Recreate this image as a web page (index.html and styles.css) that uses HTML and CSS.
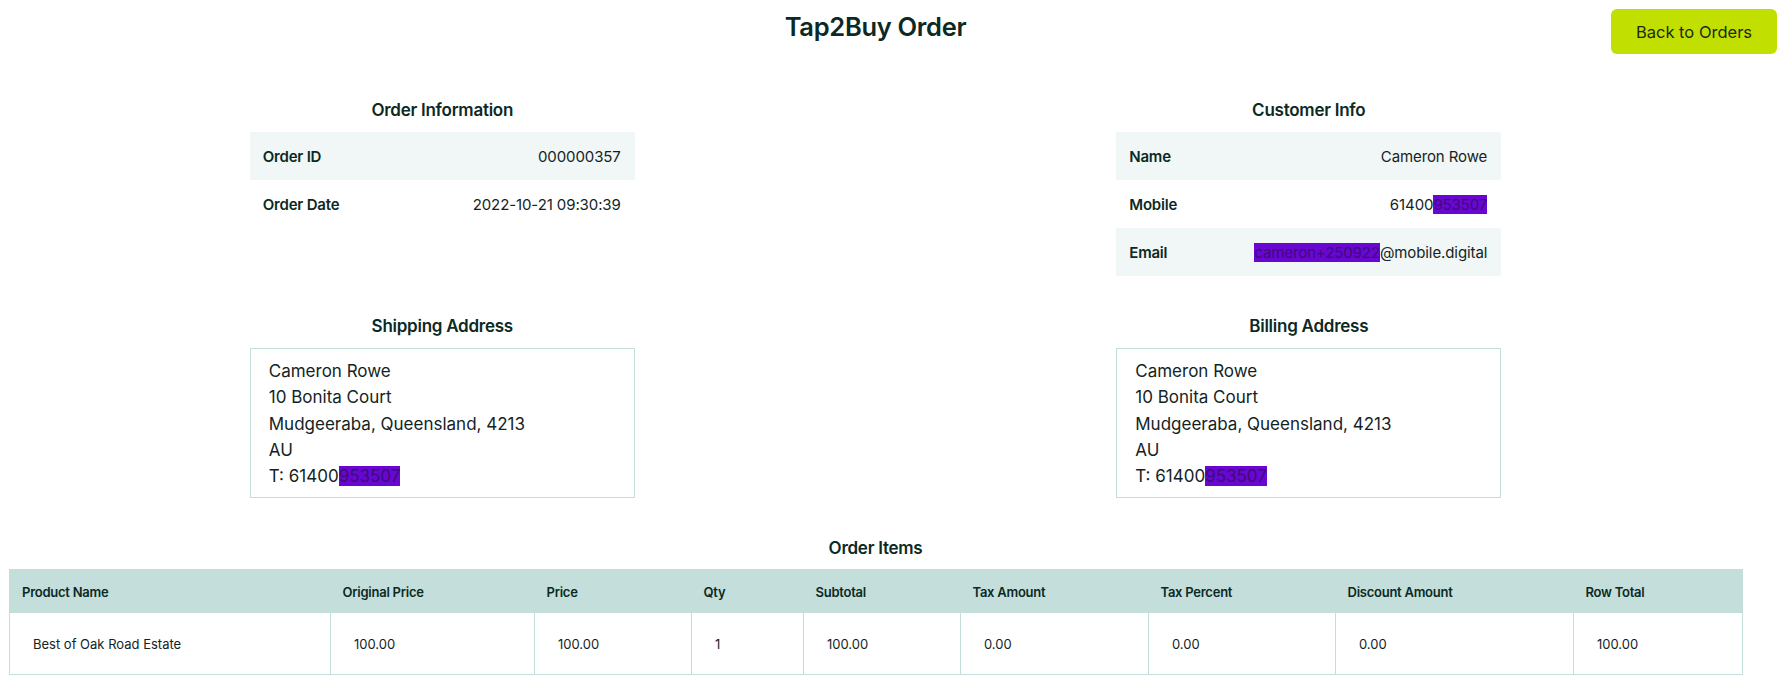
FILE: index.html
```html
<!DOCTYPE html>
<html lang="en">
<head>
<meta charset="utf-8">
<title>Tap2Buy Order</title>
<link rel="stylesheet" href="styles.css">
</head>
<body>
<a class="back-btn" href="#">Back to Orders</a>
<div class="page">
  <h1 class="title">Tap2Buy Order</h1>

  <div class="grid">
    <section class="block">
      <h2 class="block-title">Order Information</h2>
      <div class="kv">
        <div class="kv-row shade"><span class="kv-key">Order ID</span><span class="kv-val">000000357</span></div>
        <div class="kv-row"><span class="kv-key">Order Date</span><span class="kv-val">2022-10-21 09:30:39</span></div>
      </div>
    </section>

    <section class="block">
      <h2 class="block-title">Customer Info</h2>
      <div class="kv">
        <div class="kv-row shade"><span class="kv-key">Name</span><span class="kv-val">Cameron Rowe</span></div>
        <div class="kv-row"><span class="kv-key">Mobile</span><span class="kv-val">61400<span class="mask">953507</span></span></div>
        <div class="kv-row shade"><span class="kv-key">Email</span><span class="kv-val"><span class="mask">cameron+250922</span>@mobile.digital</span></div>
      </div>
    </section>

    <section class="block">
      <h2 class="block-title">Shipping Address</h2>
      <div class="address">
        <div>Cameron Rowe</div>
        <div>10 Bonita Court</div>
        <div>Mudgeeraba, Queensland, 4213</div>
        <div>AU</div>
        <div>T: 61400<span class="mask">953507</span></div>
      </div>
    </section>

    <section class="block">
      <h2 class="block-title">Billing Address</h2>
      <div class="address">
        <div>Cameron Rowe</div>
        <div>10 Bonita Court</div>
        <div>Mudgeeraba, Queensland, 4213</div>
        <div>AU</div>
        <div>T: 61400<span class="mask">953507</span></div>
      </div>
    </section>
  </div>

  <section class="items">
    <h2 class="block-title items-title">Order Items</h2>
    <table class="items-table">
      <colgroup>
        <col class="c-name"><col class="c-orig"><col class="c-price"><col class="c-qty"><col class="c-sub"><col class="c-taxa"><col class="c-taxp"><col class="c-disc"><col class="c-total">
      </colgroup>
      <thead>
        <tr>
          <th>Product Name</th>
          <th>Original Price</th>
          <th>Price</th>
          <th>Qty</th>
          <th>Subtotal</th>
          <th>Tax Amount</th>
          <th>Tax Percent</th>
          <th>Discount Amount</th>
          <th>Row Total</th>
        </tr>
      </thead>
      <tbody>
        <tr>
          <td>Best of Oak Road Estate</td>
          <td>100.00</td>
          <td>100.00</td>
          <td>1</td>
          <td>100.00</td>
          <td>0.00</td>
          <td>0.00</td>
          <td>0.00</td>
          <td>100.00</td>
        </tr>
      </tbody>
    </table>
  </section>
</div>
</body>
</html>
```

FILE: styles.css
```css
html, body {
  background: #ffffff;
}

body {
  margin: 8px;
  font-family: "Inter", "Liberation Sans", sans-serif;
  color: #13241f;
}

.page {
  width: 1733px;
  margin-left: 1px;
}

.title {
  margin: 0;
  padding-top: 2px;
  text-align: center;
  font-size: 25.5px;
  line-height: 34px;
  font-weight: 600;
  letter-spacing: -0.3px;
  color: #0c2924;
}

.back-btn {
  position: absolute;
  top: 9px;
  right: 9px;
  width: 166px;
  height: 45px;
  display: flex;
  align-items: center;
  justify-content: center;
  background: #c1df00;
  border-radius: 6px;
  color: #1c2a16;
  font-size: 16.5px;
  text-decoration: none;
}

.grid {
  margin-top: 55px;
  display: grid;
  grid-template-columns: 1fr 1fr;
  row-gap: 39px;
  justify-items: center;
  align-items: start;
}

.block {
  width: 385px;
}

.block-title {
  margin: 0 0 11px;
  text-align: center;
  font-size: 17px;
  line-height: 22px;
  font-weight: 600;
  letter-spacing: -0.25px;
  color: #0c2924;
}

.kv-row {
  height: 48px;
  display: flex;
  align-items: center;
  justify-content: space-between;
  padding: 0 14px 0 13px;
  font-size: 15px;
}

.kv-row.shade {
  background: #f1f6f6;
}

.kv-key {
  font-weight: 600;
  letter-spacing: -0.2px;
  color: #0c2924;
}

.kv-val {
  color: #13241f;
  letter-spacing: -0.1px;
}

.mask {
  background: #6a06d2;
  color: #3a0d78;
}

.address {
  border: 1px solid #c3dedb;
  padding: 9px 18px 8px;
  font-size: 17px;
  line-height: 26.3px;
  color: #13241f;
}

.items {
  margin-top: 39px;
}

.items-title {
  margin-bottom: 10px;
}

.items-table {
  width: 1733px;
  table-layout: fixed;
  border-collapse: collapse;
  border: 1px solid #c3dedb;
  font-size: 13px;
}

.c-name { width: 321px; }
.c-orig { width: 204px; }
.c-price { width: 157px; }
.c-qty { width: 112px; }
.c-sub { width: 157px; }
.c-taxa { width: 188px; }
.c-taxp { width: 187px; }
.c-disc { width: 238px; }
.c-total { width: 169px; }

.items-table th {
  height: 43px;
  padding: 0 0 0 12px;
  background: #c3dedb;
  text-align: left;
  font-weight: 600;
  letter-spacing: -0.25px;
  color: #0c2924;
}

.items-table td {
  height: 61px;
  padding: 0 0 0 23px;
  border-left: 1px solid #c3dedb;
  border-right: 1px solid #c3dedb;
  border-bottom: 1px solid #c3dedb;
  color: #13241f;
}
```
